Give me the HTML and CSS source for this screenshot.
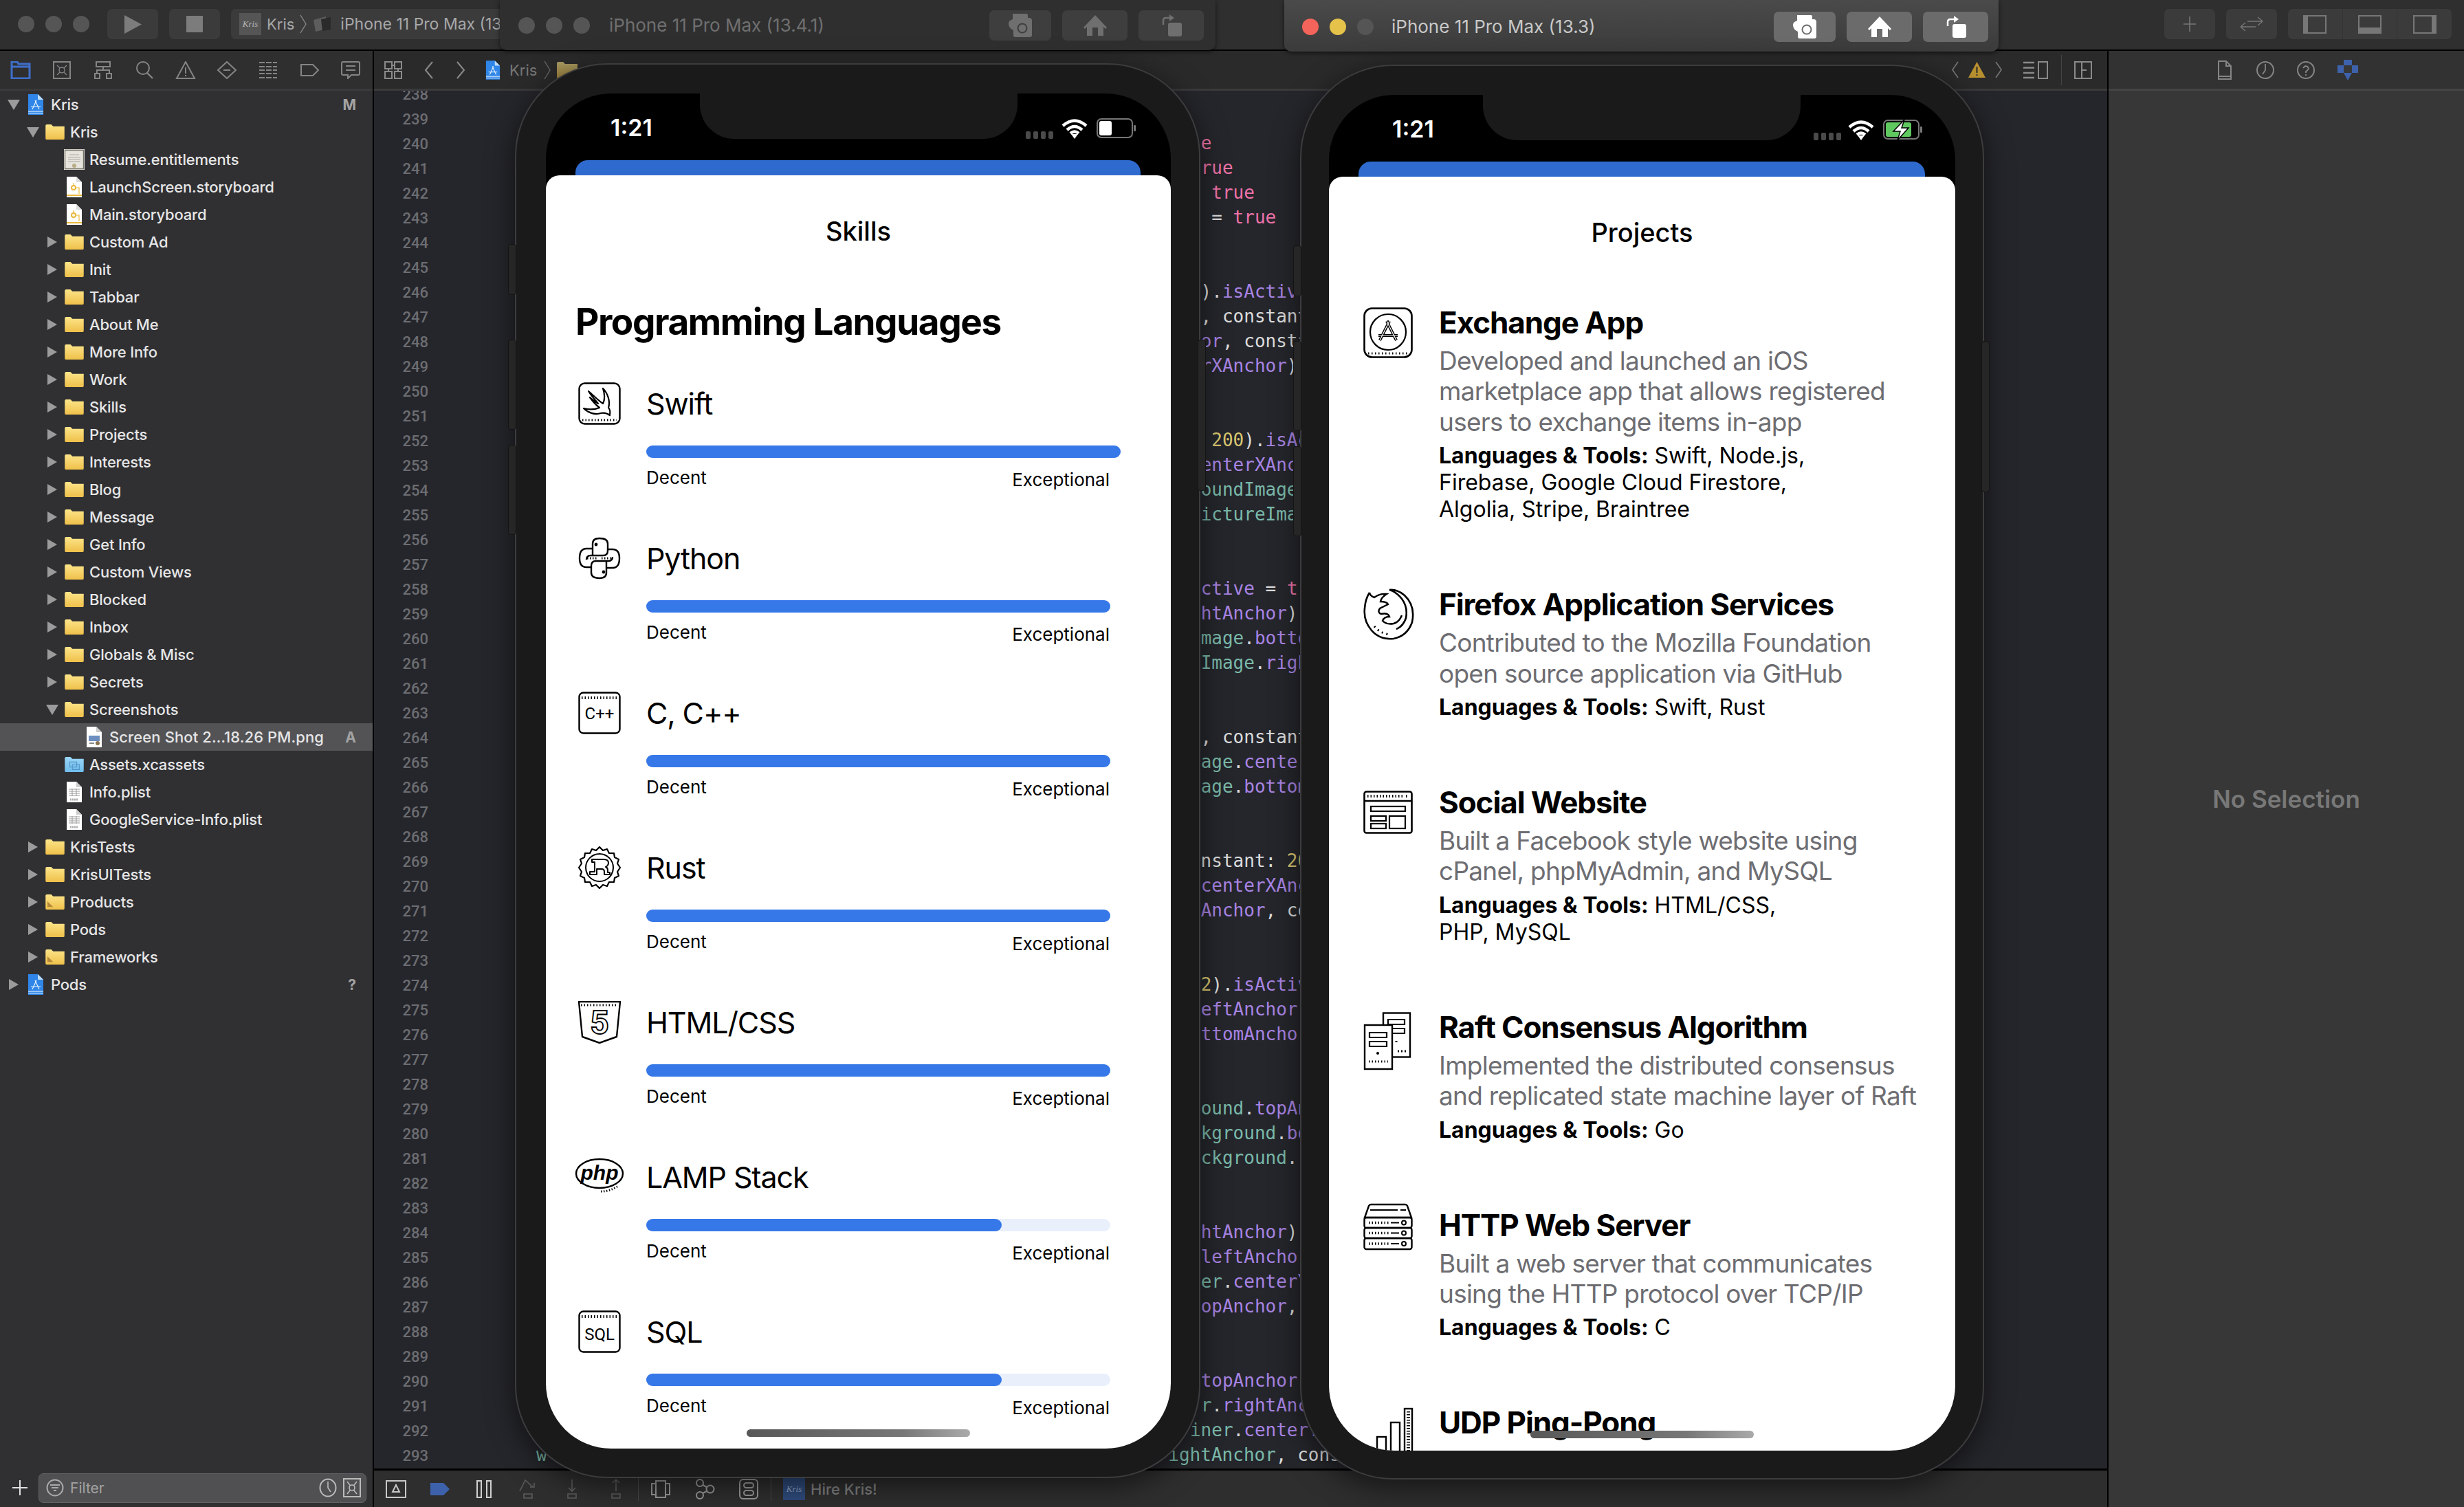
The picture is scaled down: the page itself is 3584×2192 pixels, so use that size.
FILE: index.html
```html
<!DOCTYPE html>
<html lang="en">
<head>
    <meta charset="UTF-8">
    <title>Kris - Xcode</title>
    <link rel="stylesheet" href="styles.css">
</head>
<body>

<svg class="sprite" width="0" height="0">
    <defs>
        <linearGradient id="folderFill" x1="0" y1="0" x2="0" y2="1">
            <stop offset="0" stop-color="#fde58a"/>
            <stop offset="1" stop-color="#efc04a"/>
        </linearGradient>
        <linearGradient id="blueFill" x1="0" y1="0" x2="0" y2="1">
            <stop offset="0" stop-color="#9ad6f7"/>
            <stop offset="1" stop-color="#6fbdec"/>
        </linearGradient>
        <symbol id="folder" viewBox="0 0 30 24">
            <path d="M0 2 Q0 0 2 0 H9 L12 3 H30 V22 Q30 24 28 24 H2 Q0 24 0 22 Z" fill="url(#folderFill)"/>
        </symbol>
        <symbol id="folderGroup" viewBox="0 0 30 24">
            <path d="M0 2 Q0 0 2 0 H9 L12 3 H30 V22 Q30 24 28 24 H2 Q0 24 0 22 Z" fill="url(#folderFill)"/>
            <path d="M3 11 L12 20 H3 Z" fill="#b58a3c"/>
        </symbol>
        <symbol id="folderBlue" viewBox="0 0 30 24">
            <path d="M0 2 Q0 0 2 0 H9 L12 3 H30 V22 Q30 24 28 24 H2 Q0 24 0 22 Z" fill="url(#blueFill)"/>
            <path d="M8 8 H19 V16 H8 Z M12 12 H23 V20 H12 Z" fill="none" stroke="#4f94c7" stroke-width="1.2"/>
        </symbol>
        <symbol id="blueprint" viewBox="0 0 24 30">
            <path d="M1 0 H15 L23 8 V30 H1 Z" fill="#2f86e8"/>
            <path d="M15 0 L23 8 H15 Z" fill="#bcdcfb"/>
            <path d="M1 25 H23 M1 27.5 H23" stroke="#fff" stroke-width="1"/>
            <path d="M7 22 L13 9 M17 22 L11 9 M5 18 H19" stroke="#e6f2ff" stroke-width="1.2" fill="none"/>
        </symbol>
        <symbol id="storyboard" viewBox="0 0 24 30">
            <path d="M1 0 H15 L23 8 V30 H1 Z" fill="#fff"/>
            <path d="M15 0 L23 8 H15 Z" fill="#ddd"/>
            <path d="M1 27 H23" stroke="#e9b93c" stroke-width="2"/>
            <circle cx="11" cy="16" r="3" fill="none" stroke="#e9b93c" stroke-width="2"/>
            <path d="M14 16 H19 V25 M11 9 V13" stroke="#e9b93c" stroke-width="1.2" fill="none"/>
        </symbol>
        <symbol id="plist" viewBox="0 0 24 30">
            <path d="M1 0 H15 L23 8 V30 H1 Z" fill="#fff"/>
            <path d="M15 0 L23 8 H15 Z" fill="#ccc"/>
            <path d="M4 11 H20 M4 14 H20 M4 17 H20 M4 20 H20 M9 10 V21 M15 10 V21" stroke="#999" stroke-width="1"/>
            <path d="M6 26 H18" stroke="#aaa" stroke-width="3" stroke-dasharray="2 1"/>
        </symbol>
        <symbol id="entitlements" viewBox="0 0 30 30">
            <rect width="30" height="30" fill="#e6e4dc"/>
            <rect x="1.5" y="1.5" width="27" height="27" fill="none" stroke="#77756c" stroke-width="1.4"/>
            <path d="M8 8 H22 M6 12 H24 M6 15 H24 M6 18 H24" stroke="#aaa8a0" stroke-width="1"/>
            <circle cx="15" cy="24" r="3" fill="#b9ad85"/>
        </symbol>
        <symbol id="pngfile" viewBox="0 0 24 30">
            <path d="M1 0 H15 L23 8 V30 H1 Z" fill="#fff"/>
            <path d="M15 0 L23 8 H15 Z" fill="#ccc"/>
            <rect x="4" y="13" width="16" height="8" fill="#6d8fc0"/>
            <circle cx="17" cy="24" r="3" fill="#8a7350"/>
            <path d="M5 24 H12" stroke="#888" stroke-width="2"/>
        </symbol>
        <symbol id="statusBattery" viewBox="0 0 160 30">
            <g fill="#4a4a4a"><rect x="0" y="19" width="7" height="11" rx="2"/><rect x="11" y="19" width="7" height="11" rx="2"/><rect x="22" y="19" width="7" height="11" rx="2"/><rect x="33" y="19" width="7" height="11" rx="2"/></g>
            <path d="M54 11 Q71 -4 88 11 M60 17 Q71 7 82 17 M65 22 Q71 17 77 22" fill="none" stroke="#fff" stroke-width="4.5"/>
            <path d="M71 30 L66 23 H76 Z" fill="#fff"/>
            <rect x="104" y="1" width="51" height="27" rx="6" fill="none" stroke="#777" stroke-width="2"/>
            <rect x="107" y="4" width="18" height="21" rx="3" fill="#fff"/>
            <rect x="157" y="10" width="3" height="9" rx="1" fill="#777"/>
        </symbol>
        <symbol id="statusCharging" viewBox="0 0 160 30">
            <g fill="#4a4a4a"><rect x="0" y="19" width="7" height="11" rx="2"/><rect x="11" y="19" width="7" height="11" rx="2"/><rect x="22" y="19" width="7" height="11" rx="2"/><rect x="33" y="19" width="7" height="11" rx="2"/></g>
            <path d="M52 11 Q69 -4 86 11 M58 17 Q69 7 80 17 M63 22 Q69 17 75 22" fill="none" stroke="#fff" stroke-width="4.5"/>
            <path d="M69 30 L64 23 H74 Z" fill="#fff"/>
            <rect x="102" y="1" width="51" height="27" rx="6" fill="none" stroke="#777" stroke-width="2"/>
            <rect x="105" y="4" width="37" height="21" rx="3" fill="#5fc95f"/>
            <path d="M132 0 L116 17 H126 L122 30 L138 12 H128 Z" fill="#fff" stroke="#000" stroke-width="1.5"/>
            <rect x="155" y="10" width="3" height="9" rx="1" fill="#777"/>
        </symbol>
        <symbol id="simCamera" viewBox="0 0 34 34">
            <path d="M6 0 H26 Q28 0 28 2 V6 H30 Q34 6 34 10 V31 Q34 34 31 34 H10 Q7 34 7 31 V24 Q0 21 0 14 Q0 10 6 8 Z" fill="currentColor"/>
            <circle cx="20" cy="21" r="6.5" fill="none" stroke="var(--sim-btn)" stroke-width="2"/>
        </symbol>
        <symbol id="simHome" viewBox="0 0 34 30">
            <path d="M17 0 L34 18 L32 20 L29 17 V30 H5 V17 L2 20 L0 18 Z" fill="currentColor"/>
            <rect x="13" y="18" width="8" height="12" fill="var(--sim-btn)"/>
        </symbol>
        <symbol id="simRotate" viewBox="0 0 30 32">
            <rect x="10" y="12" width="20" height="20" rx="3" fill="currentColor"/>
            <path d="M3 15 V9 Q3 5 7 5 H12" fill="none" stroke="currentColor" stroke-width="2.5"/>
            <path d="M12 0 L19 5 L12 10 Z" fill="currentColor"/>
        </symbol>
    </defs>
</svg>

<header class="toolbar">
    <div class="lights">
        <span class="light"></span><span class="light"></span><span class="light"></span>
    </div>
    <button class="tool-btn run-btn"><svg width="25" height="27" viewBox="0 0 25 27"><path d="M0 0 L25 13.5 L0 27 Z" fill="#7c7c7c"/></svg></button>
    <button class="tool-btn run-btn"><svg width="24" height="24" viewBox="0 0 24 24"><rect width="24" height="24" fill="#7c7c7c"/></svg></button>
    <div class="scheme">
        <span class="kris-tile">Kris</span>
        <span class="scheme-name">Kris</span>
        <svg class="crumb" width="10" height="28" viewBox="0 0 10 28"><path d="M1 1 L9 14 L1 27" fill="none" stroke="#888" stroke-width="1.4"/></svg>
        <svg width="25" height="22" viewBox="0 0 25 22"><path d="M0 5 L18 0 L20 18 L3 22 Z" fill="#5d5d5d"/><path d="M11 4 L25 1 V19 L13 21 Z" fill="#2a2a2a"/></svg>
        <span class="scheme-name device-name">iPhone 11 Pro Max (13.3)</span>
    </div>
    <div class="toolbar-right">
        <button class="tool-btn wide"><svg width="18" height="22" viewBox="0 0 18 22"><path d="M9 0 V22 M0 11 H18" stroke="#777" stroke-width="1.6"/></svg></button>
        <button class="tool-btn wide"><svg width="36" height="22" viewBox="0 0 36 22"><path d="M2 15 H24 M2 15 L9 9 M2 15 L9 21 M34 7 H12 M34 7 L27 1 M34 7 L27 13" fill="none" stroke="#777" stroke-width="1.4"/></svg></button>
        <div class="panel-group">
            <span><svg width="34" height="27" viewBox="0 0 34 27"><rect x="1" y="1" width="32" height="25" fill="none" stroke="#777" stroke-width="2"/><rect x="1" y="1" width="6" height="25" fill="#777"/></svg></span>
            <span><svg width="34" height="27" viewBox="0 0 34 27"><rect x="1" y="1" width="32" height="25" fill="none" stroke="#777" stroke-width="2"/><rect x="1" y="18" width="32" height="8" fill="#777"/></svg></span>
            <span><svg width="34" height="27" viewBox="0 0 34 27"><rect x="1" y="1" width="32" height="25" fill="none" stroke="#777" stroke-width="2"/><rect x="27" y="1" width="6" height="25" fill="#777"/></svg></span>
        </div>
    </div>
</header>

<main class="workspace">
    <aside class="navigator">
        <div class="nav-tabs">
            <svg class="tab" viewBox="0 0 30 26"><path d="M2 1 H10 L12 4 H28 V25 H2 Z M2 8 H28" fill="none" stroke="#3f6fc9" stroke-width="3"/></svg>
            <svg class="tab" viewBox="0 0 30 26"><rect x="3" y="1" width="24" height="24" fill="none" stroke="#858585" stroke-width="2"/><path d="M8 6 L22 20 M22 6 L8 20" stroke="#858585" stroke-width="1.4"/><circle cx="15" cy="13" r="4" fill="#2f2f32" stroke="#858585" stroke-width="1.4"/></svg>
            <svg class="tab" viewBox="0 0 30 26"><rect x="5" y="1" width="20" height="7" fill="none" stroke="#858585" stroke-width="2"/><rect x="3" y="18" width="7" height="7" fill="none" stroke="#858585" stroke-width="2"/><rect x="20" y="18" width="7" height="7" fill="none" stroke="#858585" stroke-width="2"/><path d="M15 8 V13 M6 18 V13 H24 V18" fill="none" stroke="#858585" stroke-width="2"/></svg>
            <svg class="tab" viewBox="0 0 30 26"><circle cx="13" cy="10" r="9" fill="none" stroke="#858585" stroke-width="2"/><path d="M19 17 L27 25" stroke="#858585" stroke-width="2.4"/></svg>
            <svg class="tab" viewBox="0 0 30 26"><path d="M15 1 L28 25 H2 Z M15 9 V18 M15 20 V22" fill="none" stroke="#858585" stroke-width="2"/></svg>
            <svg class="tab" viewBox="0 0 30 26"><path d="M15 1 L28 13 L15 25 L2 13 Z M10 13 H20" fill="none" stroke="#858585" stroke-width="2"/></svg>
            <svg class="tab" viewBox="0 0 30 26"><path d="M2 2 H28 M2 8 H28 M2 13 H28 M2 18 H28 M2 24 H28" stroke="#858585" stroke-width="2" stroke-dasharray="8 2"/></svg>
            <svg class="tab" viewBox="0 0 30 26"><path d="M3 5 H20 L28 13 L20 21 H3 Z" fill="none" stroke="#858585" stroke-width="2"/></svg>
            <svg class="tab" viewBox="0 0 30 26"><path d="M4 1 H26 Q28 1 28 3 V18 Q28 20 26 20 H16 L11 25 V20 H4 Q2 20 2 18 V3 Q2 1 4 1 Z M8 7 H22 M8 13 H22" fill="none" stroke="#858585" stroke-width="2"/></svg>
        </div>
        <div class="tree">
            <div class="row l0"><span class="tri down"></span><svg class="ic file"><use href="#blueprint"/></svg><span class="label">Kris</span><span class="badge">M</span></div>
            <div class="row l1"><span class="tri down"></span><svg class="ic"><use href="#folder"/></svg><span class="label">Kris</span></div>
            <div class="row l2"><span class="tri"></span><svg class="ic file"><use href="#entitlements"/></svg><span class="label">Resume.entitlements</span></div>
            <div class="row l2"><span class="tri"></span><svg class="ic file"><use href="#storyboard"/></svg><span class="label">LaunchScreen.storyboard</span></div>
            <div class="row l2"><span class="tri"></span><svg class="ic file"><use href="#storyboard"/></svg><span class="label">Main.storyboard</span></div>
            <div class="row l2"><span class="tri right"></span><svg class="ic"><use href="#folder"/></svg><span class="label">Custom Ad</span></div>
            <div class="row l2"><span class="tri right"></span><svg class="ic"><use href="#folder"/></svg><span class="label">Init</span></div>
            <div class="row l2"><span class="tri right"></span><svg class="ic"><use href="#folder"/></svg><span class="label">Tabbar</span></div>
            <div class="row l2"><span class="tri right"></span><svg class="ic"><use href="#folder"/></svg><span class="label">About Me</span></div>
            <div class="row l2"><span class="tri right"></span><svg class="ic"><use href="#folder"/></svg><span class="label">More Info</span></div>
            <div class="row l2"><span class="tri right"></span><svg class="ic"><use href="#folder"/></svg><span class="label">Work</span></div>
            <div class="row l2"><span class="tri right"></span><svg class="ic"><use href="#folder"/></svg><span class="label">Skills</span></div>
            <div class="row l2"><span class="tri right"></span><svg class="ic"><use href="#folder"/></svg><span class="label">Projects</span></div>
            <div class="row l2"><span class="tri right"></span><svg class="ic"><use href="#folder"/></svg><span class="label">Interests</span></div>
            <div class="row l2"><span class="tri right"></span><svg class="ic"><use href="#folder"/></svg><span class="label">Blog</span></div>
            <div class="row l2"><span class="tri right"></span><svg class="ic"><use href="#folder"/></svg><span class="label">Message</span></div>
            <div class="row l2"><span class="tri right"></span><svg class="ic"><use href="#folder"/></svg><span class="label">Get Info</span></div>
            <div class="row l2"><span class="tri right"></span><svg class="ic"><use href="#folder"/></svg><span class="label">Custom Views</span></div>
            <div class="row l2"><span class="tri right"></span><svg class="ic"><use href="#folder"/></svg><span class="label">Blocked</span></div>
            <div class="row l2"><span class="tri right"></span><svg class="ic"><use href="#folder"/></svg><span class="label">Inbox</span></div>
            <div class="row l2"><span class="tri right"></span><svg class="ic"><use href="#folder"/></svg><span class="label">Globals &amp; Misc</span></div>
            <div class="row l2"><span class="tri right"></span><svg class="ic"><use href="#folder"/></svg><span class="label">Secrets</span></div>
            <div class="row l2"><span class="tri down"></span><svg class="ic"><use href="#folder"/></svg><span class="label">Screenshots</span></div>
            <div class="row l3 selected"><span class="tri"></span><svg class="ic file"><use href="#pngfile"/></svg><span class="label">Screen Shot 2…18.26 PM.png</span><span class="badge">A</span></div>
            <div class="row l2"><span class="tri"></span><svg class="ic"><use href="#folderBlue"/></svg><span class="label">Assets.xcassets</span></div>
            <div class="row l2"><span class="tri"></span><svg class="ic file"><use href="#plist"/></svg><span class="label">Info.plist</span></div>
            <div class="row l2"><span class="tri"></span><svg class="ic file"><use href="#plist"/></svg><span class="label">GoogleService-Info.plist</span></div>
            <div class="row l1"><span class="tri right"></span><svg class="ic"><use href="#folder"/></svg><span class="label">KrisTests</span></div>
            <div class="row l1"><span class="tri right"></span><svg class="ic"><use href="#folder"/></svg><span class="label">KrisUITests</span></div>
            <div class="row l1"><span class="tri right"></span><svg class="ic"><use href="#folderGroup"/></svg><span class="label">Products</span></div>
            <div class="row l1"><span class="tri right"></span><svg class="ic"><use href="#folder"/></svg><span class="label">Pods</span></div>
            <div class="row l1"><span class="tri right"></span><svg class="ic"><use href="#folderGroup"/></svg><span class="label">Frameworks</span></div>
            <div class="row l0"><span class="tri right"></span><svg class="ic file"><use href="#blueprint"/></svg><span class="label">Pods</span><span class="badge">?</span></div>
        </div>
        <div class="filter-bar">
            <svg width="24" height="24" viewBox="0 0 24 24"><path d="M12 1 V23 M1 12 H23" stroke="#e0e0e0" stroke-width="2"/></svg>
            <div class="filter-field">
                <svg width="26" height="26" viewBox="0 0 26 26"><circle cx="13" cy="13" r="11.5" fill="none" stroke="#aaa" stroke-width="2"/><path d="M6 9 H20 M8 13 H18 M11 17 H15" stroke="#aaa" stroke-width="2"/></svg>
                <span class="filter-text">Filter</span>
                <svg width="26" height="28" viewBox="0 0 26 28"><ellipse cx="13" cy="14" rx="11.5" ry="12.5" fill="none" stroke="#bbb" stroke-width="2"/><path d="M13 5 V14 L17 20" fill="none" stroke="#bbb" stroke-width="1.6"/></svg>
                <svg width="26" height="28" viewBox="0 0 26 28"><rect x="1" y="1" width="24" height="26" fill="none" stroke="#bbb" stroke-width="2"/><path d="M6 5 L20 23 M20 5 L6 23" stroke="#bbb" stroke-width="1.6"/><circle cx="13" cy="14" r="4" fill="#505052" stroke="#bbb" stroke-width="1.6"/></svg>
            </div>
        </div>
    </aside>

    <section class="editor">
        <div class="jump-bar">
            <svg width="26" height="26" viewBox="0 0 26 26"><path d="M1 1 H11 V11 H1 Z M15 1 H25 V11 H15 Z M1 15 H11 V25 H1 Z M15 15 H25 V25 H15 Z M11 6 H15 M6 11 V15 M20 11 V15" fill="none" stroke="#8a8a8a" stroke-width="2"/></svg>
            <svg class="jump-prev" width="14" height="26" viewBox="0 0 14 26"><path d="M12 1 L2 13 L12 25" fill="none" stroke="#8a8a8a" stroke-width="2"/></svg>
            <svg class="jump-next" width="14" height="26" viewBox="0 0 14 26"><path d="M2 1 L12 13 L2 25" fill="none" stroke="#8a8a8a" stroke-width="2"/></svg>
            <svg class="jump-file" width="22" height="28"><use href="#blueprint"/></svg>
            <span class="jump-name">Kris</span>
            <svg width="10" height="28" viewBox="0 0 10 28"><path d="M1 1 L9 14 L1 27" fill="none" stroke="#666" stroke-width="1.4"/></svg>
            <svg class="jump-folder" width="32" height="24"><use href="#folder"/></svg>
            <div class="jump-tools">
                <svg width="10" height="25" viewBox="0 0 10 25"><path d="M9 1 L1 12.5 L9 24" fill="none" stroke="#777" stroke-width="1.6"/></svg>
                <svg width="25" height="23" viewBox="0 0 25 23"><path d="M12.5 0 L25 23 H0 Z" fill="#b9902f"/><path d="M12.5 7 V16 M12.5 18 V20" stroke="#2a2a2a" stroke-width="2"/></svg>
                <svg width="10" height="25" viewBox="0 0 10 25"><path d="M1 1 L9 12.5 L1 24" fill="none" stroke="#777" stroke-width="1.6"/></svg>
                <svg class="jump-list" width="36" height="26" viewBox="0 0 36 26"><path d="M0 2 H16 M0 9.5 H16 M0 17 H16 M0 24 H16" stroke="#8a8a8a" stroke-width="2.4"/><rect x="22" y="1" width="13" height="24" fill="none" stroke="#8a8a8a" stroke-width="2"/></svg>
                <span class="jump-sep"></span>
                <svg class="jump-split" width="26" height="26" viewBox="0 0 26 26"><rect x="1" y="1" width="24" height="24" fill="none" stroke="#8a8a8a" stroke-width="2"/><path d="M11 1 V25 M11 13 H18" stroke="#8a8a8a" stroke-width="2"/></svg>
            </div>
        </div>
        <div class="code-area">
            <div class="gutter">
                <div>238</div><div>239</div><div>240</div><div>241</div><div>242</div><div>243</div><div>244</div><div>245</div>
                <div>246</div><div>247</div><div>248</div><div>249</div><div>250</div><div>251</div><div>252</div><div>253</div>
                <div>254</div><div>255</div><div>256</div><div>257</div><div>258</div><div>259</div><div>260</div><div>261</div>
                <div>262</div><div>263</div><div>264</div><div>265</div><div>266</div><div>267</div><div>268</div><div>269</div>
                <div>270</div><div>271</div><div>272</div><div>273</div><div>274</div><div>275</div><div>276</div><div>277</div>
                <div>278</div><div>279</div><div>280</div><div>281</div><div>282</div><div>283</div><div>284</div><div>285</div>
                <div>286</div><div>287</div><div>288</div><div>289</div><div>290</div><div>291</div><div>292</div><div>293</div>
            </div>
            <div class="code">
                <div class="line"></div>
                <div class="line"></div>
                <div class="line">    <span class="kw">e</span></div>
                <div class="line">    <span class="kw">rue</span></div>
                <div class="line">     <span class="kw">true</span></div>
                <div class="line">     = <span class="kw">true</span></div>
                <div class="line"></div>
                <div class="line"></div>
                <div class="line">    ).<span class="fn">isActive</span></div>
                <div class="line">    , constant</div>
                <div class="line">    <span class="fn">or</span>, constant</div>
                <div class="line">    <span class="fn">rXAnchor</span>)</div>
                <div class="line"></div>
                <div class="line"></div>
                <div class="line">     <span class="num">200</span>).<span class="fn">isActive</span></div>
                <div class="line">    <span class="fn">enterXAnchor</span></div>
                <div class="line">    <span class="var">oundImage</span></div>
                <div class="line">    <span class="var">ictureImage</span></div>
                <div class="line"></div>
                <div class="line"></div>
                <div class="line">    <span class="fn">ctive</span> = <span class="kw">true</span></div>
                <div class="line">    <span class="fn">htAnchor</span>)</div>
                <div class="line">    <span class="var">mage</span>.<span class="fn">bottom</span></div>
                <div class="line">    <span class="var">Image</span>.<span class="fn">right</span></div>
                <div class="line"></div>
                <div class="line"></div>
                <div class="line">    , constant</div>
                <div class="line">    <span class="var">age</span>.<span class="fn">center</span></div>
                <div class="line">    <span class="var">age</span>.<span class="fn">bottom</span></div>
                <div class="line"></div>
                <div class="line"></div>
                <div class="line">    nstant: <span class="num">20</span></div>
                <div class="line">    <span class="fn">centerXAnchor</span></div>
                <div class="line">    <span class="fn">Anchor</span>, constant</div>
                <div class="line"></div>
                <div class="line"></div>
                <div class="line">    <span class="num">2</span>).<span class="fn">isActive</span></div>
                <div class="line">    <span class="fn">eftAnchor</span></div>
                <div class="line">    <span class="fn">ttomAnchor</span></div>
                <div class="line"></div>
                <div class="line"></div>
                <div class="line">    <span class="var">ound</span>.<span class="fn">topAnchor</span></div>
                <div class="line">    <span class="var">kground</span>.<span class="fn">bottom</span></div>
                <div class="line">    <span class="var">ckground</span>.</div>
                <div class="line"></div>
                <div class="line"></div>
                <div class="line">    <span class="fn">htAnchor</span>)</div>
                <div class="line">    <span class="fn">leftAnchor</span></div>
                <div class="line">    <span class="var">er</span>.<span class="fn">centerY</span></div>
                <div class="line">    <span class="fn">opAnchor</span>,</div>
                <div class="line"></div>
                <div class="line"></div>
                <div class="line">    <span class="fn">topAnchor</span></div>
                <div class="line">    <span class="var">r</span>.<span class="fn">rightAnchor</span></div>
                <div class="line">   <span class="var">iner</span>.<span class="fn">centerYAnchor</span></div>
                <div class="line line-full"><span class="var">w</span><span class="code-gap"></span> <span class="var">ightAnchor</span>, constant: -20)</div>
            </div>
        </div>
        <div class="debug-bar">
            <svg width="30" height="26" viewBox="0 0 30 26"><rect x="1" y="1" width="28" height="24" fill="none" stroke="#c8c8c8" stroke-width="2"/><path d="M15 7 L20 17 H10 Z" fill="none" stroke="#c8c8c8" stroke-width="2"/></svg>
            <svg width="30" height="26" viewBox="0 0 30 26"><path d="M1 4 H20 L29 13 L20 22 H1 Z" fill="#3d62ab"/></svg>
            <svg width="30" height="26" viewBox="0 0 30 26"><path d="M5 1 H11 V25 H5 Z M19 1 H25 V25 H19 Z" fill="none" stroke="#d0d0d0" stroke-width="2"/></svg>
            <svg width="30" height="30" viewBox="0 0 30 30"><path d="M3 18 L11 2 L22 12 M18 12 H24 V6 M9 22 H21 V28 H9 Z" fill="none" stroke="#5c5c5c" stroke-width="1.6"/></svg>
            <svg width="30" height="30" viewBox="0 0 30 30"><path d="M15 1 V18 M10 13 L15 18 L20 13 M9 22 H21 V28 H9 Z" fill="none" stroke="#5c5c5c" stroke-width="1.6"/></svg>
            <svg width="30" height="30" viewBox="0 0 30 30"><path d="M15 18 V1 M10 6 L15 1 L20 6 M9 22 H21 V28 H9 Z" fill="none" stroke="#5c5c5c" stroke-width="1.6"/></svg>
            <span class="debug-sep"></span>
            <svg width="30" height="26" viewBox="0 0 30 26"><path d="M8 1 H22 V5 H28 V21 H22 V25 H8 V21 H2 V5 H8 Z M8 5 V21 M22 5 V21" fill="none" stroke="#9a9a9a" stroke-width="2"/></svg>
            <svg width="30" height="30" viewBox="0 0 30 30"><circle cx="8" cy="6" r="5" fill="none" stroke="#9a9a9a" stroke-width="2"/><circle cx="23" cy="15" r="5.5" fill="none" stroke="#9a9a9a" stroke-width="2"/><circle cx="8" cy="24" r="5" fill="none" stroke="#9a9a9a" stroke-width="2"/><path d="M12 9 L18 12 M12 21 L18 18" stroke="#9a9a9a" stroke-width="2"/></svg>
            <svg width="30" height="30" viewBox="0 0 30 30"><rect x="2" y="1" width="26" height="28" rx="5" fill="none" stroke="#9a9a9a" stroke-width="2"/><rect x="8" y="6" width="14" height="7" rx="3.5" fill="none" stroke="#9a9a9a" stroke-width="2"/><rect x="8" y="17" width="14" height="7" rx="3.5" fill="none" stroke="#9a9a9a" stroke-width="2"/></svg>
            <span class="debug-sep"></span>
            <span class="kris-tile kris-blue">Kris</span>
            <span class="debug-target">Hire Kris!</span>
        </div>
    </section>

    <aside class="inspector">
        <div class="inspector-tabs">
            <svg width="26" height="28" viewBox="0 0 26 28"><path d="M4 1 H15 L22 8 V27 H4 Z M4 23 H22 M15 1 V8 H22" fill="none" stroke="#858585" stroke-width="2"/></svg>
            <svg width="26" height="28" viewBox="0 0 26 28"><circle cx="13" cy="14" r="12" fill="none" stroke="#858585" stroke-width="2"/><path d="M13 5 V14 L9 20" fill="none" stroke="#858585" stroke-width="1.8"/></svg>
            <svg width="26" height="28" viewBox="0 0 26 28"><circle cx="13" cy="14" r="12" fill="none" stroke="#858585" stroke-width="2"/><path d="M9 11 Q13 5 17 11 Q17 13 13 16 V18 M13 20 V22" fill="none" stroke="#858585" stroke-width="1.8"/></svg>
            <svg width="30" height="30" viewBox="0 0 30 30"><path d="M9 0 H21 V8 H30 V19 H21 L15 30 L9 19 H0 V8 H9 Z" fill="#3d62ab"/><path d="M9 8 H21 V19 H9 Z" fill="#373737"/></svg>
        </div>
        <div class="inspector-body">No Selection</div>
    </aside>
</main>

<!-- simulator title bars float above the Xcode window -->
<div class="sim-bar sim-back">
    <div class="lights">
        <span class="light"></span><span class="light"></span><span class="light"></span>
    </div>
    <span class="sim-title">iPhone 11 Pro Max (13.4.1)</span>
    <div class="sim-btns">
        <button class="sim-btn"><svg width="34" height="34"><use href="#simCamera"/></svg></button>
        <button class="sim-btn"><svg width="34" height="30"><use href="#simHome"/></svg></button>
        <button class="sim-btn"><svg width="30" height="32"><use href="#simRotate"/></svg></button>
    </div>
</div>
<div class="sim-bar sim-front">
    <div class="lights">
        <span class="light red"></span><span class="light yellow"></span><span class="light"></span>
    </div>
    <span class="sim-title">iPhone 11 Pro Max (13.3)</span>
    <div class="sim-btns">
        <button class="sim-btn"><svg width="34" height="34"><use href="#simCamera"/></svg></button>
        <button class="sim-btn"><svg width="34" height="30"><use href="#simHome"/></svg></button>
        <button class="sim-btn"><svg width="30" height="32"><use href="#simRotate"/></svg></button>
    </div>
</div>

<div class="phone phone-skills">
    <span class="hw hw-left hw-1"></span><span class="hw hw-left hw-2"></span><span class="hw hw-left hw-3"></span><span class="hw hw-right"></span>
    <div class="screen">
        <div class="notch"></div>
        <div class="status">
            <span class="time">1:21</span>
            <svg class="status-icons"><use href="#statusBattery"/></svg>
        </div>
        <div class="sheet-back"></div>
        <div class="card">
            <h3 class="card-title">Skills</h3>
            <h2 class="section-title">Programming Languages</h2>

            <div class="skill">
                <svg class="skill-icon" viewBox="0 0 62 62"><rect x="1.5" y="1.5" width="59" height="59" rx="8" fill="none" stroke="#000" stroke-width="2.4"/><path d="M8 38 C14 44 24 48 33 45 C38 44 42 45 46 48 C47 42 46 39 44 37 C47 28 43 16 36 9 C39 18 39 25 36 31 C30 27 22 19 15 13 C20 21 25 26 29 31 C24 28 20 25 17 22 C22 29 27 34 31 37 C24 40 16 40 8 38 Z" fill="none" stroke="#000" stroke-width="2.2" stroke-linejoin="round"/><path d="M6 55 H56" stroke="#000" stroke-width="3" stroke-dasharray="1.5 3"/></svg>
                <div class="skill-main">
                    <div class="skill-name">Swift</div>
                    <div class="track track-wide"><div class="fill" style="width: 100%"></div></div>
                    <div class="scale"><span>Decent</span><span class="scale-high">Exceptional</span></div>
                </div>
            </div>
            <div class="skill">
                <svg class="skill-icon" viewBox="0 0 62 62"><path d="M21 27 V10 Q21 2 31 2 Q43 2 43 10 V20 Q43 27 36 27 H18 Q12 27 12 33 M41 35 V52 Q41 60 31 60 Q19 60 19 52 V42 Q19 35 26 35 H44 Q50 35 50 29" fill="none" stroke="#000" stroke-width="2.4"/><path d="M21 17 H12 Q2 17 2 31 Q2 44 12 44 H19 M41 45 H50 Q60 45 60 31 Q60 18 50 18 H43" fill="none" stroke="#000" stroke-width="2.4"/><circle cx="26" cy="11" r="2.4"/><circle cx="37" cy="51" r="2.4"/><path d="M13 31 H27 M34 31 H48" stroke="#000" stroke-width="3" stroke-dasharray="1.5 2.5"/></svg>
                <div class="skill-main">
                    <div class="skill-name">Python</div>
                    <div class="track"><div class="fill" style="width: 100%"></div></div>
                    <div class="scale"><span>Decent</span><span class="scale-high">Exceptional</span></div>
                </div>
            </div>
            <div class="skill">
                <svg class="skill-icon" viewBox="0 0 62 62"><rect x="1.5" y="1.5" width="59" height="59" rx="6" fill="none" stroke="#000" stroke-width="2.4"/><path d="M5 9 H57" stroke="#000" stroke-width="4" stroke-dasharray="1.5 3"/><text class="icon-text" x="31" y="40" text-anchor="middle">C++</text></svg>
                <div class="skill-main">
                    <div class="skill-name">C, C++</div>
                    <div class="track"><div class="fill" style="width: 100%"></div></div>
                    <div class="scale"><span>Decent</span><span class="scale-high">Exceptional</span></div>
                </div>
            </div>
            <div class="skill">
                <svg class="skill-icon" viewBox="0 0 62 62"><path d="M31 1 L36 6 L42 4 L45 10 L52 10 L53 16 L59 19 L57 25 L61 31 L57 37 L59 43 L53 46 L52 52 L45 52 L42 58 L36 56 L31 61 L26 56 L20 58 L17 52 L10 52 L9 46 L3 43 L5 37 L1 31 L5 25 L3 19 L9 16 L10 10 L17 10 L20 4 L26 6 Z" fill="none" stroke="#000" stroke-width="2.2" stroke-linejoin="round"/><circle cx="31" cy="31" r="20" fill="none" stroke="#000" stroke-width="2"/><path d="M17 41 H27 V33 H34 Q38 33 38 37 V41 H46 V38 H43 V35 Q43 31 40 30 Q44 28 44 24 Q44 19 37 19 H20 V23 H24 V37 H17 Z" fill="none" stroke="#000" stroke-width="2" stroke-linejoin="round"/></svg>
                <div class="skill-main">
                    <div class="skill-name">Rust</div>
                    <div class="track"><div class="fill" style="width: 100%"></div></div>
                    <div class="scale"><span>Decent</span><span class="scale-high">Exceptional</span></div>
                </div>
            </div>
            <div class="skill">
                <svg class="skill-icon" viewBox="0 0 62 62"><path d="M1 1 H61 L56 52 L31 61 L6 52 Z" fill="none" stroke="#000" stroke-width="2.4" stroke-linejoin="round"/><path d="M4 6 H58" stroke="#000" stroke-width="3" stroke-dasharray="1.5 3"/><text class="icon-five" x="31" y="48" text-anchor="middle">5</text></svg>
                <div class="skill-main">
                    <div class="skill-name">HTML/CSS</div>
                    <div class="track"><div class="fill" style="width: 100%"></div></div>
                    <div class="scale"><span>Decent</span><span class="scale-high">Exceptional</span></div>
                </div>
            </div>
            <div class="skill">
                <svg class="skill-icon php" viewBox="0 0 72 62"><ellipse cx="36" cy="26" rx="34" ry="21" fill="none" stroke="#000" stroke-width="2.4"/><text class="icon-php" x="36" y="35" text-anchor="middle">php</text><path d="M38 52 Q50 52 62 45" fill="none" stroke="#000" stroke-width="3" stroke-dasharray="1.5 2.5"/></svg>
                <div class="skill-main">
                    <div class="skill-name">LAMP Stack</div>
                    <div class="track"><div class="fill" style="width: 76.6%"></div></div>
                    <div class="scale"><span>Decent</span><span class="scale-high">Exceptional</span></div>
                </div>
            </div>
            <div class="skill">
                <svg class="skill-icon" viewBox="0 0 62 62"><rect x="1.5" y="1.5" width="59" height="59" rx="6" fill="none" stroke="#000" stroke-width="2.4"/><path d="M5 9 H57" stroke="#000" stroke-width="4" stroke-dasharray="1.5 3"/><text class="icon-text" x="31" y="43" text-anchor="middle">SQL</text></svg>
                <div class="skill-main">
                    <div class="skill-name">SQL</div>
                    <div class="track"><div class="fill" style="width: 76.6%"></div></div>
                    <div class="scale"><span>Decent</span><span class="scale-high">Exceptional</span></div>
                </div>
            </div>
        </div>
        <div class="home-bar"></div>
    </div>
</div>

<div class="phone phone-projects">
    <span class="hw hw-left hw-1"></span><span class="hw hw-left hw-2"></span><span class="hw hw-left hw-3"></span><span class="hw hw-right"></span>
    <div class="screen">
        <div class="notch"></div>
        <div class="status">
            <span class="time">1:21</span>
            <svg class="status-icons"><use href="#statusCharging"/></svg>
        </div>
        <div class="sheet-back"></div>
        <div class="card">
            <h3 class="card-title">Projects</h3>
            <div class="project-list">
                <article class="project">
                    <svg class="project-icon" viewBox="0 0 72 74"><rect x="1.5" y="1.5" width="69" height="71" rx="11" fill="none" stroke="#000" stroke-width="2.6"/><circle cx="36" cy="36" r="26" fill="none" stroke="#000" stroke-width="2.2"/><path d="M24 48 L38 20 M48 48 L34 20 M22 41 H50" fill="none" stroke="#000" stroke-width="4"/><path d="M24 48 L38 20 M48 48 L34 20 M22 41 H50" fill="none" stroke="#fff" stroke-width="1.2"/><path d="M7 67 H65" stroke="#000" stroke-width="3" stroke-dasharray="1.5 3.5"/></svg>
                    <div class="project-body">
                        <h4>Exchange App</h4>
                        <p class="desc">Developed and launched an iOS<br>marketplace app that allows registered<br>users to exchange items in-app</p>
                        <p class="tools"><b>Languages &amp; Tools:</b> Swift, Node.js,<br>Firebase, Google Cloud Firestore,<br>Algolia, Stripe, Braintree</p>
                    </div>
                </article>
                <article class="project">
                    <svg class="project-icon" viewBox="0 0 72 74"><path d="M9 5 Q3 14 2 28 Q0 46 12 60 Q24 74 44 72 Q64 68 71 48 Q76 24 60 9 Q50 0 38 1 Q48 4 56 14 Q65 26 62 42 Q58 54 48 58" fill="none" stroke="#000" stroke-width="2.6"/><path d="M9 5 Q10 10 16 12 Q24 6 34 7 Q26 12 25 18 Q34 18 36 22 L24 28 Q20 34 26 36 Q36 34 38 40 Q30 40 28 46 Q34 52 44 50 Q52 48 56 38" fill="none" stroke="#000" stroke-width="2.4"/><path d="M16 54 Q24 64 38 66" fill="none" stroke="#000" stroke-width="3" stroke-dasharray="2 5"/></svg>
                    <div class="project-body">
                        <h4>Firefox Application Services</h4>
                        <p class="desc">Contributed to the Mozilla Foundation<br>open source application via GitHub</p>
                        <p class="tools"><b>Languages &amp; Tools:</b> Swift, Rust</p>
                    </div>
                </article>
                <article class="project">
                    <svg class="project-icon" viewBox="0 0 72 74"><g transform="translate(0 5)"><rect x="1.5" y="1.5" width="69" height="60" rx="3" fill="none" stroke="#000" stroke-width="2.6"/><path d="M1.5 15 H70.5" stroke="#000" stroke-width="2.4"/><path d="M6 8 H58 M62 8 H66" stroke="#000" stroke-width="4" stroke-dasharray="1.5 3"/><rect x="11" y="23" width="50" height="7" fill="none" stroke="#000" stroke-width="2.2"/><rect x="11" y="37" width="22" height="7" fill="none" stroke="#000" stroke-width="2.2"/><rect x="11" y="48" width="22" height="7" fill="none" stroke="#000" stroke-width="2.2"/><rect x="38" y="37" width="23" height="18" fill="none" stroke="#000" stroke-width="2.2"/></g></svg>
                    <div class="project-body">
                        <h4>Social Website</h4>
                        <p class="desc">Built a Facebook style website using<br>cPanel, phpMyAdmin, and MySQL</p>
                        <p class="tools"><b>Languages &amp; Tools:</b> HTML/CSS,<br>PHP, MySQL</p>
                    </div>
                </article>
                <article class="project">
                    <svg class="project-icon" viewBox="0 0 72 84"><rect x="29" y="1.5" width="39" height="64" fill="#fff" stroke="#000" stroke-width="2.4"/><path d="M36 11 H60 V18 H36 Z M36 24 H60 V31 H36 Z" fill="none" stroke="#000" stroke-width="2.2"/><path d="M48 42 V47 M50 57 H64" stroke="#000" stroke-width="3" stroke-dasharray="2 3"/><rect x="2" y="19" width="40" height="64" fill="#fff" stroke="#000" stroke-width="2.4"/><path d="M9 30 H34 V37 H9 Z M9 43 H34 V50 H9 Z" fill="none" stroke="#000" stroke-width="2.2"/><circle cx="21" cy="60" r="2"/><path d="M8 72 H36" stroke="#000" stroke-width="3" stroke-dasharray="1.5 3"/></svg>
                    <div class="project-body">
                        <h4>Raft Consensus Algorithm</h4>
                        <p class="desc">Implemented the distributed consensus<br>and replicated state machine layer of Raft</p>
                        <p class="tools"><b>Languages &amp; Tools:</b> Go</p>
                    </div>
                </article>
                <article class="project">
                    <svg class="project-icon" viewBox="0 0 72 74"><g transform="translate(0 -9)"><path d="M2 20 L8 3 Q9 1 11 1 H61 Q63 1 64 3 L70 20 Z" fill="none" stroke="#000" stroke-width="2.4"/><path d="M10 9 H50 M54 9 H62" stroke="#000" stroke-width="2"/><rect x="1.5" y="20" width="69" height="15" rx="3" fill="none" stroke="#000" stroke-width="2.4"/><rect x="1.5" y="35" width="69" height="15" rx="3" fill="none" stroke="#000" stroke-width="2.4"/><rect x="1.5" y="50" width="69" height="16" rx="3" fill="none" stroke="#000" stroke-width="2.4"/><path d="M8 27.5 H38 M8 42.5 H38 M8 58 H38" stroke="#000" stroke-width="3.4" stroke-dasharray="1.5 3"/><path d="M40 27.5 H52 M40 42.5 H52 M40 58 H52" stroke="#000" stroke-width="2"/><circle cx="59" cy="27.5" r="3" fill="none" stroke="#000" stroke-width="2"/><circle cx="59" cy="42.5" r="3" fill="none" stroke="#000" stroke-width="2"/><circle cx="59" cy="58" r="3" fill="none" stroke="#000" stroke-width="2"/></g></svg>
                    <div class="project-body">
                        <h4>HTTP Web Server</h4>
                        <p class="desc">Built a web server that communicates<br>using the HTTP protocol over TCP/IP</p>
                        <p class="tools"><b>Languages &amp; Tools:</b> C</p>
                    </div>
                </article>
                <article class="project">
                    <svg class="project-icon" viewBox="0 0 72 84"><g transform="translate(0 2)"><rect x="60" y="0" width="11" height="80" fill="none" stroke="#000" stroke-width="2.4"/><path d="M65.5 4 V76" stroke="#000" stroke-width="5" stroke-dasharray="1.5 2.5"/><rect x="40" y="20" width="13" height="60" fill="none" stroke="#000" stroke-width="2.4"/><rect x="20" y="41" width="13" height="40" fill="none" stroke="#000" stroke-width="2.4"/><rect x="2" y="61" width="13" height="20" fill="none" stroke="#000" stroke-width="2.4"/></g></svg>
                    <div class="project-body">
                        <h4>UDP Ping-Pong</h4>
                    </div>
                </article>
            </div>
        </div>
        <div class="home-bar"></div>
    </div>
</div>

</body>
</html>
```

FILE: styles.css
```css
/* Xcode window with two simulators floating on top */
* {
    box-sizing: border-box;
}
html, body {
    height: 100%;
    margin: 0;
}
body {
    position: relative;
    overflow: hidden;
    display: flex;
    flex-direction: column;
    background: #2f2f30;
    font-family: Inter, "Noto Sans", sans-serif;
    color: #e6e6e6;
}
button {
    border: none;
    padding: 0;
    font: inherit;
}
svg {
    flex-shrink: 0;
}
.sprite {
    position: absolute;
}

/* top toolbar */
.toolbar {
    height: 74px;
    flex-shrink: 0;
    display: flex;
    align-items: center;
    padding: 0 18px 2px 26px;
    background: #2f2f30;
    border-bottom: 2px solid #000;
}
.lights {
    display: flex;
    gap: 16px;
    width: 104px;
    flex-shrink: 0;
}
.light {
    width: 24px;
    height: 24px;
    border-radius: 50%;
    background: #555556;
}
.light.red {
    background: #f4645a;
}
.light.yellow {
    background: #e5c24a;
}
.tool-btn {
    height: 44px;
    background: #3b3b3c;
    border-radius: 7px;
    display: flex;
    align-items: center;
    justify-content: center;
}
.run-btn {
    width: 74px;
    margin-right: 16px;
}
.toolbar > .lights + .run-btn {
    margin-left: 26px;
}
.scheme {
    display: flex;
    align-items: center;
    gap: 8px;
    height: 44px;
    width: 420px;
    padding-left: 12px;
    background: #3b3b3c;
    border-radius: 7px;
    overflow: hidden;
    white-space: nowrap;
}
.kris-tile {
    width: 32px;
    height: 32px;
    flex-shrink: 0;
    display: inline-flex;
    align-items: center;
    justify-content: center;
    background: #555;
    color: #b5b5b5;
    font-family: "Liberation Serif", serif;
    font-style: italic;
    font-size: 13px;
}
.kris-blue {
    background: #2e4a7a;
    color: #93a4c4;
}
.scheme-name {
    font-size: 22px;
    color: #a8a8a8;
}
.device-name {
    margin-left: 6px;
    font-size: 23px;
}
.crumb {
    margin-right: 2px;
}
.toolbar-right {
    margin-left: auto;
    display: flex;
    gap: 16px;
}
.tool-btn.wide {
    width: 74px;
}
.panel-group {
    display: flex;
    width: 238px;
    height: 44px;
    background: #3b3b3c;
    border-radius: 7px;
}
.panel-group span {
    flex: 1;
    display: flex;
    align-items: center;
    justify-content: center;
}
.panel-group span + span {
    border-left: 1px solid #333;
}

/* main columns */
.workspace {
    flex: 1;
    min-height: 0;
    display: flex;
}
.navigator {
    width: 544px;
    flex-shrink: 0;
    display: flex;
    flex-direction: column;
    background: #303033;
    border-right: 2px solid #000;
}
.nav-tabs {
    height: 58px;
    flex-shrink: 0;
    display: flex;
    align-items: center;
    gap: 30px;
    padding-left: 15px;
    background: #2f2f30;
    border-bottom: 3px solid #3a3a3c;
}
.tab {
    width: 30px;
    height: 26px;
}
.tree {
    flex: 1;
}
.row {
    display: flex;
    align-items: center;
    height: 40px;
    padding-right: 24px;
    font-size: 22px;
    font-weight: 500;
    white-space: nowrap;
}
.l0 { padding-left: 10px; }
.l1 { padding-left: 38px; }
.l2 { padding-left: 66px; }
.l3 { padding-left: 95px; }
.selected {
    background: #535356;
}
.selected .label {
    letter-spacing: 0.1px;
}
.tri {
    width: 19px;
    height: 20px;
    margin-right: 8px;
    display: flex;
    align-items: center;
    justify-content: center;
}
.tri.right::before {
    content: "";
    border-left: 14px solid #9b9b9b;
    border-top: 8px solid transparent;
    border-bottom: 8px solid transparent;
}
.tri.down::before {
    content: "";
    border-top: 15px solid #9b9b9b;
    border-left: 9px solid transparent;
    border-right: 9px solid transparent;
}
.ic {
    width: 30px;
    height: 22px;
    margin-right: 7px;
}
.ic.file {
    height: 30px;
}
.label {
    letter-spacing: -0.2px;
}
.badge {
    margin-left: auto;
    font-weight: 700;
    color: #a3a3a3;
    font-size: 21px;
}
.filter-bar {
    height: 56px;
    flex-shrink: 0;
    display: flex;
    align-items: center;
    gap: 15px;
    padding: 0 9px 0 17px;
    background: #303033;
}
.filter-field {
    flex: 1;
    height: 43px;
    display: flex;
    align-items: center;
    gap: 9px;
    padding: 0 7px 0 10px;
    background: #505052;
    border: 1px solid #636365;
    border-radius: 7px;
}
.filter-text {
    flex: 1;
    font-size: 21px;
    color: #a2a2a2;
}

/* editor */
.editor {
    flex: 1;
    min-width: 0;
    display: flex;
    flex-direction: column;
    background: #25262b;
}
.jump-bar {
    height: 58px;
    flex-shrink: 0;
    display: flex;
    align-items: center;
    padding: 0 22px 0 15px;
    background: #2a2a2b;
    border-bottom: 3px solid #3a3a3c;
}
.jump-prev {
    margin-left: 32px;
}
.jump-next {
    margin-left: 32px;
}
.jump-file {
    margin-left: 29px;
}
.jump-name {
    margin: 0 10px 0 13px;
    font-size: 22px;
    color: #777;
}
.jump-folder {
    margin-left: 8px;
    opacity: 0.6;
}
.jump-tools {
    margin-left: auto;
    display: flex;
    align-items: center;
    gap: 14px;
}
.jump-list {
    margin-left: 17px;
}
.jump-sep {
    width: 1px;
    height: 44px;
    margin-left: 5px;
    background: #444;
}
.jump-split {
    margin-left: 4px;
}
.code-area {
    flex: 1;
    min-height: 0;
    overflow: hidden;
    display: flex;
    align-items: flex-start;
    border-bottom: 3px solid #000;
}
.gutter {
    width: 79px;
    flex-shrink: 0;
    margin-top: -12px;
    text-align: right;
    font-family: Roboto, sans-serif;
    font-size: 22px;
    font-weight: 500;
    line-height: 36px;
    color: #6c6d72;
}
.code {
    flex: 1;
    min-width: 0;
    margin-top: -14px;
    padding-left: 157px;
    font-family: "DejaVu Sans Mono", monospace;
    font-size: 26px;
    line-height: 36px;
    color: #dcdcdd;
}
.line {
    height: 36px;
    padding-left: 904px;
    white-space: pre;
}
.line-full {
    padding-left: 0;
}
.code-gap {
    display: inline-block;
    width: 888px;
}
.kw {
    color: #ee72a8;
}
.fn {
    color: #a884e4;
}
.var {
    color: #7ab9aa;
}
.num {
    color: #d9c670;
}
.debug-bar {
    height: 53px;
    flex-shrink: 0;
    display: flex;
    align-items: center;
    gap: 34px;
    padding-left: 17px;
    background: #2e2e2f;
}
.debug-sep {
    width: 1px;
    height: 34px;
    margin: 0 -17px;
    background: #4a4a4a;
}
.debug-target {
    margin-left: -26px;
    font-size: 22px;
    font-weight: 500;
    color: #7f7f7f;
}

/* inspector */
.inspector {
    width: 519px;
    flex-shrink: 0;
    display: flex;
    flex-direction: column;
    background: #373737;
    border-left: 2px solid #000;
}
.inspector-tabs {
    height: 58px;
    flex-shrink: 0;
    display: flex;
    align-items: center;
    gap: 33px;
    padding-left: 156px;
    background: #323233;
    border-bottom: 3px solid #444;
}
.inspector-body {
    flex: 1;
    display: flex;
    align-items: center;
    justify-content: center;
    font-size: 35px;
    font-weight: 600;
    color: #787878;
}

/* simulator title bars */
.sim-bar {
    position: absolute;
    top: 0;
    height: 73px;
    display: flex;
    align-items: center;
    border-radius: 0 0 10px 10px;
    box-shadow: 0 2px 6px rgba(0, 0, 0, 0.6);
    white-space: nowrap;
}
.sim-back {
    left: 727px;
    width: 1041px;
    padding: 0 17px 0 27px;
    background: #2f2f30;
    --sim-btn: #3e3e3f;
    color: #6f6f6f;
}
.sim-front {
    left: 1868px;
    width: 1039px;
    height: 75px;
    padding: 2px 15px 0 26px;
    background: linear-gradient(#4a4a4a, #3b3b3b);
    --sim-btn: #6b6b6b;
    color: #fff;
}
.sim-title {
    margin-left: 28px;
    font-size: 26px;
    color: #6f6f6f;
}
.sim-front .sim-title {
    color: #c8c8c8;
    margin-left: 26px;
}
.sim-btns {
    margin-left: auto;
    display: flex;
    gap: 16px;
}
.sim-btn {
    width: 95px;
    height: 44px;
    display: flex;
    align-items: center;
    justify-content: center;
    border-radius: 7px;
    background: var(--sim-btn);
    color: inherit;
}
.sim-btn:first-child {
    width: 90px;
}

/* simulator devices */
.phone {
    position: absolute;
    height: 2058px;
    display: flex;
    background: #1a1a1b;
    border: 2px solid #3c3c3e;
    border-radius: 135px;
    box-shadow: 0 10px 40px rgba(0, 0, 0, 0.55);
}
.phone-skills {
    left: 749px;
    top: 92px;
    width: 997px;
    padding: 42px 41px 41px 43px;
}
.phone-projects {
    left: 1891px;
    top: 94px;
    width: 995px;
    padding: 42px 40px 40px 40px;
}
.hw {
    position: absolute;
    width: 12px;
    background: #262627;
    border: 1px solid #141414;
    border-radius: 4px;
}
.hw-left {
    left: -12px;
}
.hw-1 {
    top: 261px;
    height: 74px;
}
.hw-2 {
    top: 400px;
    height: 131px;
}
.hw-3 {
    top: 553px;
    height: 131px;
}
.hw-right {
    right: -10px;
    top: 400px;
    height: 220px;
}
.screen {
    position: relative;
    flex: 1;
    display: flex;
    flex-direction: column;
    overflow: hidden;
    background: #000;
    border-radius: 95px;
}
.notch {
    position: absolute;
    left: 224px;
    top: 0;
    width: 462px;
    height: 66px;
    background: #1a1a1b;
    border-radius: 0 0 50px 50px;
}
.status {
    height: 97px;
    flex-shrink: 0;
    display: flex;
    justify-content: space-between;
    padding: 28px 51px 0 94px;
    color: #fff;
}
.phone-projects .status {
    padding-left: 92px;
    padding-right: 46px;
}
.time {
    font-size: 34px;
    font-weight: 600;
    line-height: 44px;
}
.status-icons {
    width: 160px;
    height: 30px;
    margin-top: 8px;
}
.sheet-back {
    height: 22px;
    flex-shrink: 0;
    margin: 0 44px 0 43px;
    background: #2f6bce;
    border-radius: 18px 18px 0 0;
}
.card {
    flex: 1;
    min-height: 0;
    overflow: hidden;
    padding: 57px 0 0 47px;
    background: #fff;
    border-radius: 20px 20px 0 0;
    color: #000;
}
.card-title {
    margin: 0 0 0 -47px;
    font-size: 38px;
    font-weight: 500;
    line-height: 48px;
    text-align: center;
}
.section-title {
    margin: 74px 0 54px -4px;
    font-size: 53px;
    font-weight: 700;
    line-height: 68px;
    letter-spacing: -1.4px;
}

/* skills list */
.skill {
    display: grid;
    grid-template-columns: 62px 675px;
    column-gap: 37px;
    height: 225px;
}
.skill-icon {
    width: 62px;
    height: 62px;
}
.skill-icon.php {
    width: 72px;
    margin-left: -5px;
}
.skill-name {
    font-size: 43px;
    line-height: 62px;
    letter-spacing: -1.1px;
}
.track {
    height: 18px;
    margin-top: 30px;
    background: #e9f0fc;
    border-radius: 9px;
}
.track-wide {
    width: 690px;
}
.fill {
    height: 100%;
    background: #3778e8;
    border-radius: 9px;
}
.scale {
    display: flex;
    justify-content: space-between;
    margin-top: 13px;
    padding-right: 1px;
    font-size: 26px;
    line-height: 32px;
}
.scale-high {
    position: relative;
    top: 3px;
}
.icon-text {
    font-family: Roboto, sans-serif;
    font-size: 24px;
}
.icon-five {
    font-family: Roboto, sans-serif;
    font-weight: 700;
    font-size: 48px;
    fill: #fff;
    stroke: #000;
    stroke-width: 1.8px;
}
.icon-php {
    font-family: "Liberation Sans", sans-serif;
    font-style: italic;
    font-weight: 700;
    font-size: 30px;
}

/* projects list */
.project-list {
    margin-top: 79px;
    padding-left: 3px;
    display: flex;
    flex-direction: column;
    gap: 91px;
}
.project {
    display: grid;
    grid-template-columns: 72px 1fr;
    column-gap: 38px;
}
.project-icon {
    width: 72px;
    margin-top: 6px;
    overflow: visible;
}
.project h4 {
    margin: 0;
    font-size: 44px;
    font-weight: 700;
    line-height: 56px;
    letter-spacing: -1.1px;
}
.desc {
    margin: 6px 0 0;
    font-size: 37px;
    line-height: 44.4px;
    letter-spacing: -0.75px;
    color: #6d6d72;
}
.tools {
    margin: 7px 0 0;
    font-size: 32px;
    line-height: 39px;
}
.tools b {
    font-weight: 700;
}
.home-bar {
    position: absolute;
    left: 292px;
    bottom: 17px;
    width: 325px;
    height: 11px;
    border-radius: 6px;
    background: linear-gradient(90deg, #585858, #777 70%, #aaa);
}
.phone-projects .home-bar {
    left: 293px;
    bottom: 18px;
}
```
